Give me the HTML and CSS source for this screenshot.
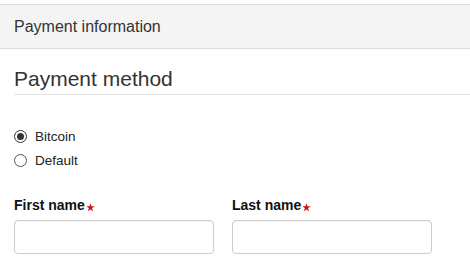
FILE: index.html
```html
<!DOCTYPE html>
<html>
<head>
<meta charset="utf-8">
<link rel="stylesheet" href="styles.css">
</head>
<body>
<div class="panel-heading">Payment information</div>
<h2 class="section-title">Payment method</h2>
<div class="radio-group">
  <label class="radio-row"><input type="radio" name="pm" checked><span>Bitcoin</span></label>
  <label class="radio-row"><input type="radio" name="pm"><span>Default</span></label>
</div>
<div class="fields">
  <div class="field">
    <label class="field-label">First name<svg class="req" viewBox="0 0 10 10" aria-label="required"><polygon points="5,0.3 6.1,3.6 9.6,3.6 6.8,5.7 7.9,9.2 5,7.1 2.1,9.2 3.2,5.7 0.4,3.6 3.9,3.6"/></svg></label>
    <input class="text-input" type="text">
  </div>
  <div class="field">
    <label class="field-label">Last name<svg class="req" viewBox="0 0 10 10" aria-label="required"><polygon points="5,0.3 6.1,3.6 9.6,3.6 6.8,5.7 7.9,9.2 5,7.1 2.1,9.2 3.2,5.7 0.4,3.6 3.9,3.6"/></svg></label>
    <input class="text-input" type="text">
  </div>
</div>
</body>
</html>
```
FILE: styles.css
```css
html, body {
  margin: 0;
  padding: 0;
  background: #fff;
}
body {
  font-family: "Liberation Sans", Arial, sans-serif;
  color: #333;
}
.panel-heading {
  margin-top: 4px;
  height: 43px;
  line-height: 43px;
  padding-left: 14px;
  font-size: 16px;
  color: #333;
  background: #f4f4f4;
  border-top: 1px solid #dcdcdc;
  border-bottom: 1px solid #dcdcdc;
}
.section-title {
  margin: 18px 0 0 14px;
  padding-bottom: 3px;
  font-size: 21px;
  font-weight: normal;
  line-height: 24px;
  color: #333;
  border-bottom: 1px solid #e5e5e5;
}
.radio-group {
  margin-top: 29px;
  padding-left: 14px;
  display: flex;
  flex-direction: column;
}
.radio-row {
  display: flex;
  align-items: center;
  height: 24px;
  font-size: 13.5px;
  color: #222;
}
.radio-row input {
  appearance: none;
  -webkit-appearance: none;
  margin: 1px 8px 0 0;
  width: 13px;
  height: 13px;
  border: 1px solid #555;
  border-radius: 50%;
  background: #fff;
  box-sizing: border-box;
  display: flex;
  align-items: center;
  justify-content: center;
}
.radio-row input:checked {
  border-color: #333;
}
.radio-row input:checked::after {
  content: "";
  width: 7px;
  height: 7px;
  border-radius: 50%;
  background: #333;
}
.fields {
  margin-top: 24px;
  padding-left: 14px;
  display: grid;
  grid-template-columns: 200px 200px;
  column-gap: 18px;
}
.field {
  display: flex;
  flex-direction: column;
}
.field-label {
  font-size: 14px;
  font-weight: bold;
  line-height: 18px;
  color: #111;
  margin-bottom: 6px;
}
.req {
  width: 9px;
  height: 9px;
  fill: #d0161b;
  vertical-align: -2px;
  margin-left: 1px;
}
.text-input {
  box-sizing: border-box;
  width: 200px;
  height: 34px;
  margin: 0;
  border: 1px solid #ccc;
  border-radius: 4px;
  background: #fff;
  box-shadow: inset 0 1px 1px rgba(0,0,0,0.04);
}
```
